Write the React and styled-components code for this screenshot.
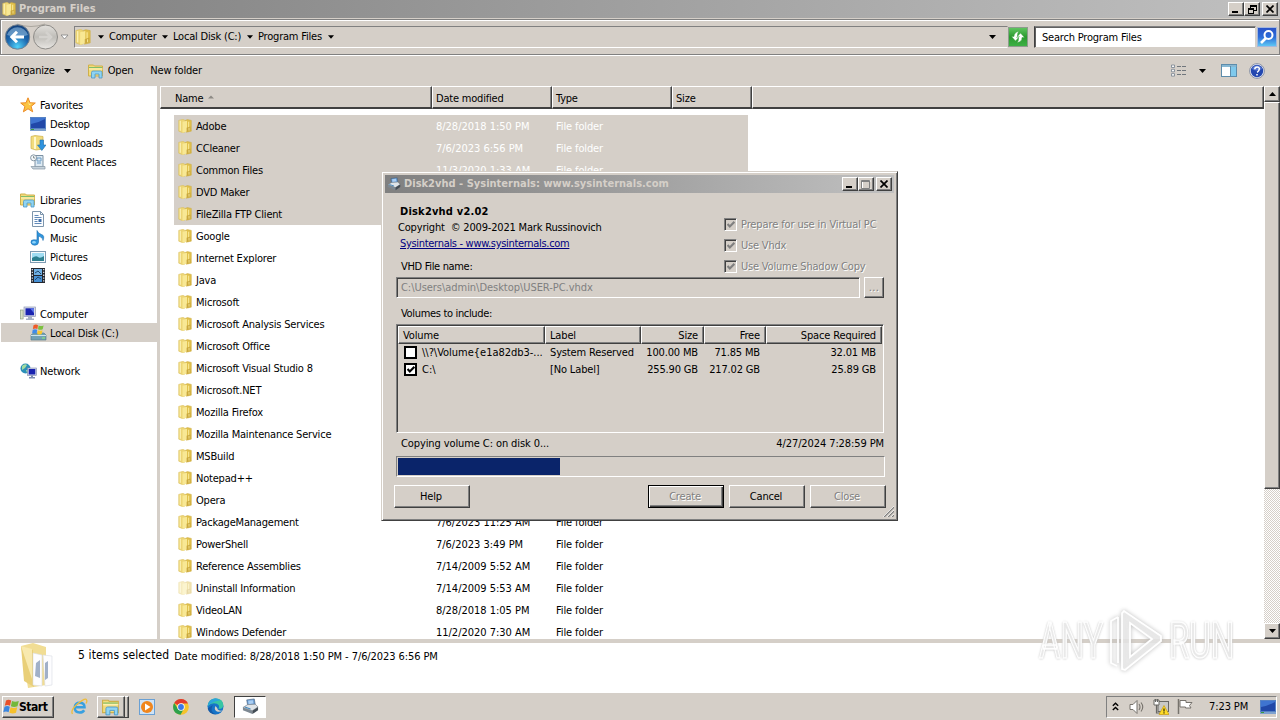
import React from "react";
import styled, { createGlobalStyle, css } from "styled-components";

const FACE = "#d5cfc8";

const Global = createGlobalStyle`
  * { box-sizing: border-box; }
  html, body { margin: 0; padding: 0; overflow: hidden; }
  body {
    font-family: "DejaVu Sans Condensed", "DejaVu Sans", Tahoma, sans-serif;
    font-stretch: condensed;
    font-size: 11px;
    line-height: 14px;
    letter-spacing: -0.2px;
    color: #000;
    white-space: pre;
  }
  svg { display: block; flex: none; }
`;

const raised = css`
  background: ${FACE};
  border: 1px solid;
  border-color: #fff #404040 #404040 #fff;
  box-shadow: inset -1px -1px 0 #808080;
`;

const Screen = styled.div`
  position: relative;
  width: 1280px;
  height: 720px;
  background: ${FACE};
  display: flex;
  flex-direction: column;
  overflow: hidden;
`;
const TitleBar = styled.div`
  height: ${(p) => p.$h}px;
  flex: none;
  display: flex;
  align-items: center;
  padding: 0 ${(p) => p.$pr ?? 2}px 0 ${(p) => p.$pad}px;
  gap: 3px;
  background: linear-gradient(90deg, #808080, #c0c0c0);
  color: ${FACE};
  font-weight: bold;
  letter-spacing: ${(p) => p.$ls}px;
`;
const Spacer = styled.div`flex: 1;`;
const CaptionButton = styled.div`
  ${raised}
  width: 16px;
  height: 14px;
  margin-left: ${(p) => (p.$gap ? -1 : -3)}px;
  display: flex;
  align-items: center;
  justify-content: center;
`;
const TitleGap = styled.div`
  height: 1px;
  flex: none;
`;
const NavBar = styled.div`
  height: 36px;
  flex: none;
  display: flex;
  align-items: center;
  padding: 0 0 0 3px;
  border: 1px solid #808080;
  box-shadow: inset 1px 1px 0 #fff, 0 1px 0 #fff;
`;
const AddressBox = styled.div`
  margin-left: 4px;
  width: 934px;
  height: 22px;
  display: flex;
  align-items: center;
  border: 1px solid;
  border-color: #808080 ${FACE} #fff #808080;
`;
const Crumb = styled.span`
  margin-left: ${(p) => p.$ml}px;
  width: ${(p) => p.$w}px;
`;
const RefreshButton = styled.div`
  width: 20px;
  height: 20px;
  border: 1px solid #8c9c8c;
  background: linear-gradient(#5fc45f, #2b9a2f 50%, #3cb043);
  display: flex;
  align-items: center;
  justify-content: center;
`;
const SearchBox = styled.div`
  margin-left: 6px;
  width: 222px;
  height: 22px;
  background: #fff;
  border: 1px solid;
  border-color: #808080 ${FACE} ${FACE} #404040;
  box-shadow: inset 1px 1px 0 #606060;
  padding: 4px 0 0 7px;
`;
const SearchButton = styled.div`
  margin-left: 1px;
  width: 20px;
  height: 20px;
  border: 1px solid #a5b8dc;
  background: linear-gradient(#2a53c8, #2c6cd8 50%, #5fc6f4);
  display: flex;
  align-items: center;
  justify-content: center;
`;
const Toolbar = styled.div`
  height: 31px;
  flex: none;
  display: flex;
  align-items: center;
  padding: 0 15px 0 12px;
`;
const ToolItem = styled.span`
  margin-right: ${(p) => p.$mr}px;
`;
const Body = styled.div`
  height: 553px;
  flex: none;
  display: flex;
`;
const Sidebar = styled.div`
  width: 157px;
  background: #fff;
  padding-top: 9px;
`;
const SideRow = styled.div`
  height: 19px;
  margin-left: 1px;
  width: ${(p) => (p.$selected ? 159 : 156)}px;
  display: flex;
  align-items: center;
  padding-left: ${(p) => (p.$child ? 29 : 19)}px;
  background: ${(p) => (p.$selected ? FACE : "transparent")};
`;
const SideIcon = styled.span`
  width: 20px;
  flex: none;
`;
const SideText = styled.span`
  padding-top: 2px;
  letter-spacing: -0.17px;
`;
const FilePane = styled.div`
  margin-left: 3px;
  flex: 1;
  background: #fff;
  overflow: hidden;
`;
const HeaderRow = styled.div`
  display: flex;
  height: 23px;
`;
const HeaderCell = styled.div`
  ${raised}
  border-bottom: 2px solid #404040;
  box-shadow: inset -1px 0 0 #808080;
  width: ${(p) => p.$w}px;
  padding: 5px 0 0 ${(p) => p.$pl ?? 3}px;
  display: flex;
  gap: 5px;
`;
const FileList = styled.div`
  padding: 6px 0 0 14px;
`;
const FileRow = styled.div`
  width: 574px;
  height: 22px;
  display: flex;
  align-items: center;
  padding-left: 4px;
  background: ${(p) => (p.$selected ? FACE : "transparent")};
`;
const FileName = styled.span`
  margin-left: 4px;
  padding-top: 2px;
  width: 240px;
`;
const FileMeta = styled.span`
  width: 120px;
  padding-top: 2px;
  letter-spacing: ${(p) => p.$ls}px;
  color: ${(p) => (p.$selected ? "#fff" : "#000")};
`;
const ScrollBar = styled.div`
  width: 16px;
  display: flex;
  flex-direction: column;
  background: repeating-conic-gradient(#fff 0 25%, ${FACE} 0 50%) 0 0 / 2px 2px;
`;
const ScrollButton = styled.div`
  ${raised}
  height: 16px;
  display: flex;
  align-items: center;
  justify-content: center;
`;
const ScrollThumb = styled.div`
  ${raised}
  height: 387px;
`;
const DetailsPane = styled.div`
  margin-top: 4px;
  height: 49px;
  flex: none;
  background: #fff;
  display: flex;
  align-items: flex-start;
  padding-left: 20px;
`;
const DetailsText = styled.span`
  font-size: ${(p) => p.$size}px;
  letter-spacing: ${(p) => p.$ls}px;
  margin: ${(p) => p.$mt}px 5px 0 0;
`;
const Taskbar = styled.div`
  flex: 1;
  border-top: 1px solid #fff;
  display: flex;
  align-items: center;
  padding: 0 3px 0 2px;
`;
const StartButton = styled.div`
  ${raised}
  width: 52px;
  height: 22px;
  display: flex;
  align-items: center;
  font-weight: bold;
  font-size: 12px;
  letter-spacing: -0.45px;
`;
const TaskSlot = styled.div`
  width: ${(p) => p.$w}px;
  height: 22px;
  margin-left: ${(p) => p.$ml}px;
  display: flex;
  align-items: center;
  justify-content: center;
  ${(p) => p.$raised && raised}
  ${(p) =>
    p.$pressed &&
    css`
      background: #fff;
      border: 1px solid;
      border-color: #404040 #fff #fff #404040;
    `}
`;
const StackEdge = styled.div`
  width: 4px;
  height: 22px;
  border-right: 1px solid #404040;
  border-top: 1px solid #fff;
  border-bottom: 1px solid #404040;
  box-shadow: inset -1px 0 0 #808080;
`;
const Tray = styled.div`
  width: 171px;
  height: 22px;
  border: 1px solid;
  border-color: #808080 #fff #fff #808080;
  display: flex;
  align-items: center;
  padding-left: 5px;
`;
const Clock = styled.span`
  margin: 0 11px 0 16px;
  width: 40px;
  letter-spacing: -0.1px;
`;

const Dialog = styled.div`
  position: absolute;
  left: 381px;
  top: 171px;
  width: 517px;
  height: 350px;
  background: ${FACE};
  border: 1px solid;
  border-color: ${FACE} #404040 #404040 ${FACE};
  box-shadow: inset 1px 1px 0 #fff, inset -1px -1px 0 #808080;
  padding: 3px;
`;
const DialogBody = styled.div`
  padding: 11px 9px 0 11px;
`;
const DialogTop = styled.div`
  display: flex;
  justify-content: space-between;
  height: 73px;
`;
const About = styled.div`
  display: flex;
  flex-direction: column;
  line-height: 16px;
`;
const AboutLine = styled.div`
  padding-left: ${(p) => p.$pl}px;
  letter-spacing: ${(p) => p.$ls}px;
  font-weight: ${(p) => (p.$bold ? "bold" : "normal")};
`;
const Link = styled(AboutLine)`
  color: #000080;
  text-decoration: underline;
`;
const Options = styled.div`
  width: 161px;
  padding-top: 10px;
`;
const Option = styled.div`
  display: flex;
  align-items: center;
  height: 21px;
  gap: 4px;
  color: #808080;
  text-shadow: 1px 1px 0 #fff;
  letter-spacing: ${(p) => p.$ls ?? -0.2}px;
`;
const OptionBox = styled.div`
  width: 13px;
  height: 13px;
  border: 1px solid;
  border-color: #808080 #fff #fff #808080;
  box-shadow: inset 1px 1px 0 #404040;
  padding: 2px 0 0 2px;
`;
const FieldRow = styled.div`
  display: flex;
  height: 21px;
  gap: 4px;
`;
const Field = styled.div`
  width: 464px;
  border: 1px solid;
  border-color: #808080 #fff #fff #808080;
  box-shadow: inset 1px 1px 0 #404040;
  color: #808080;
  padding: 3px 0 0 4px;
  letter-spacing: -0.04px;
`;
const Browse = styled.div`
  ${raised}
  width: 20px;
  text-align: center;
  color: #808080;
  text-shadow: 1px 1px 0 #fff;
  padding-top: 3px;
  letter-spacing: 0.4px;
`;
const Label = styled.div`
  padding: ${(p) => p.$pt}px 0 0 5px;
  height: ${(p) => p.$h}px;
  line-height: 14px;
  letter-spacing: -0.33px;
`;
const VolumeList = styled.div`
  width: 488px;
  height: 109px;
  border: 1px solid;
  border-color: #808080 #fff #fff #808080;
  box-shadow: inset 1px 1px 0 #404040;
  padding: 1px;
`;
const VolumeRow = styled.div`
  display: flex;
  height: 17px;
  align-items: center;
`;
const VolumeHead = styled(VolumeRow)`
  height: 18px;
  align-items: stretch;
`;
const Col = styled.div`
  width: ${(p) => p.$w}px;
  padding: 0 6px 0 ${(p) => p.$pl ?? 5}px;
  display: flex;
  align-items: center;
  gap: 4px;
  justify-content: ${(p) => (p.$right ? "flex-end" : "flex-start")};
  letter-spacing: ${(p) => p.$ls ?? -0.15}px;
`;
const HeadCol = styled(Col)`
  ${raised}
  padding: 1px 5px 0 4px;
`;
const RowBox = styled.div`
  width: 13px;
  height: 13px;
  flex: none;
  margin-right: 1px;
  border: 2px solid #000;
  background: #fff;
  padding: 1px;
`;
const StatusRow = styled.div`
  display: flex;
  justify-content: space-between;
  height: 23px;
  padding: 4px 1px 0 5px;
  letter-spacing: -0.1px;
`;
const Progress = styled.div`
  width: 489px;
  height: 21px;
  border: 1px solid;
  border-color: #808080 #fff #fff #808080;
  padding: 1px;
`;
const ProgressFill = styled.div`
  width: 162px;
  height: 17px;
  background: #0a246a;
`;
const ButtonRow = styled.div`
  display: flex;
  margin: 8px -1px 0 -2px;
  gap: 5px;
`;
const Button = styled.div`
  ${raised}
  width: 76px;
  height: 23px;
  text-align: center;
  padding: 4px 2px 0 0;
  ${(p) => p.$disabled && css`color: #808080; text-shadow: 1px 1px 0 #fff;`}
  ${(p) => p.$default && css`border-color: #000; box-shadow: inset 1px 1px 0 #fff, inset -1px -1px 0 #404040, inset -2px -2px 0 #808080;`}
`;
const Grip = styled.div`
  position: absolute;
  right: 3px;
  bottom: 3px;
`;
const Watermark = styled.div`
  position: absolute;
  left: 1039px;
  top: 608px;
  display: flex;
  align-items: center;
`;
const MarkWord = styled.span`
  width: 64px;
  font: 400 50px/66px Roboto, sans-serif;
  letter-spacing: 0;
  color: rgba(244, 244, 244, 0.8);
  -webkit-text-stroke: 1.6px rgba(255, 255, 255, 0.95);
  text-shadow: 0 0 3px #b8b8b8, 0 1px 3px #d0d0d0;
  transform: scaleX(${(p) => p.$sx});
  transform-origin: 0 50%;
`;
const MarkLogo = styled.svg`
  filter: drop-shadow(0 0 2px #b4b4b4);
`;
const Gap = styled.div`
  width: ${(p) => p.$w}px;
  flex: none;
`;
const Arrow = styled.svg`
  margin-left: ${(p) => p.$ml ?? 0}px;
  margin-right: ${(p) => p.$mr ?? 0}px;
  transform: ${(p) => (p.$up ? "rotate(180deg)" : "none")};
`;
const SortArrow = styled.svg`
  margin-top: 3px;
`;

const Down = ({ w = 7, ml, mr, up }) => (
  <Arrow width={w} height="4" viewBox="0 0 7 4" $ml={ml} $mr={mr} $up={up}><path d="M0 0h7L3.5 4z" fill="#000" /></Arrow>
);
const Check = ({ c }) => (
  <svg width="8" height="8" viewBox="0 0 8 8"><path d="M.6 3l2.2 2.4L7.4.8" fill="none" stroke={c} strokeWidth="2.1" /></svg>
);
const Folder = ({ size = 15, faded }) => (
  <svg width={size} height={size} viewBox="0 0 14 15" opacity={faded ? 0.45 : 1} preserveAspectRatio="none">
    <path d="M.7 1.500L5 .3 7 1.500V14l-2.500.6L.7 13z" fill="#edd574" stroke="#d8bd58" strokeWidth=".5" />
    <path d="M7.500 1.300l2-.7 3.800.9V13l-5 1.200z" fill="#e0c04c" stroke="#cba93a" strokeWidth=".5" />
    <path d="M4.500 3l4.500-1.200v11.500L4.500 14.700z" fill="#f8e894" />
    <path d="M2.300 2v10.500" stroke="#fbf0b4" strokeWidth="1.200" /><path d="M10.600 3v6" stroke="#f6e48e" strokeWidth="1.200" />
    <path d="M8.500 9.500l4-1.500v4.500l-4 1.300z" fill="#bf9a34" opacity=".65" />
    <path d="M11 9.500v3" stroke="#f6e48e" />
  </svg>
);
const Library = ({ size = 16 }) => (
  <svg width={size} height={size} viewBox="0 0 16 16">
    <path d="M.5 3V2h5l1 1h8v10h-14z" fill="#f2db7b" stroke="#cfb04b" />
    <path d="M1 4.5h13" stroke="#7fbf6d" /><path d="M1 6h13.5" stroke="#fff5bc" />
    <path d="M3.5 15V9.500Q3.500 8 5 8h7.500Q14 8 14 9.500V15h-3v-4H7v4z" fill="#8fd4f2" stroke="#4c97c8" strokeWidth=".8" />
  </svg>
);
const Screen16 = () => (
  <svg width="16" height="14" viewBox="0 0 16 14">
    <rect x=".5" y=".5" width="15" height="11" fill="#2148a8" stroke="#5682c4" />
    <path d="M1 7q7-1 14-5V1H1z" fill="#3f74d0" /><path d="M0 12h16v2H0z" fill="#7fa2cf" /><path d="M1 12h3v1H1z" fill="#3b9c3f" />
  </svg>
);
const Monitor = () => (
  <svg width="16" height="16" viewBox="0 0 16 16">
    <rect x="4" y="1" width="11.5" height="9.5" fill="#d6dae8" stroke="#8f98b4" strokeWidth=".7" />
    <rect x="5.5" y="2.3" width="8.5" height="7" fill="#1923b0" /><path d="M10 2.3h4v5z" fill="#5a74e8" />
    <path d="M8 10.5h4v2h2v1.5H6v-1.5h2z" fill="#a4afc5" /><rect x=".5" y="4" width="2.6" height="9" fill="#d8dfc6" stroke="#7c9176" strokeWidth=".6" />
  </svg>
);
const Drive = () => (
  <svg width="17" height="17" viewBox="0 0 17 17">
    <path d="M1 11l3-2h10l2 2v5H1z" fill="#72a1b4" stroke="#4f7788" strokeWidth=".6" /><path d="M1 11.5h15" stroke="#cde3ea" />
    <path d="M3.500 1.200q2.500-1.500 4.500 0L7.400 5q-2-1-4.500 0z" fill="#ee5b2a" /><path d="M8.600 1.500q2.400 1.200 5 0L12.700 5.200q-2.500 1-4.700 0z" fill="#7cc13f" />
    <path d="M2.700 5.800q2.300-1 4.500 0L6.600 9.500q-2-1-4.500 0z" fill="#3f8ce8" /><path d="M7.800 6.200q2 1.200 4.700 0l-.8 3.800q-2.500 1-4.500 0z" fill="#f8c72c" />
    <path d="M12 14h3" stroke="#8ff070" />
  </svg>
);
const sideIcons = {
  star: <svg width="16" height="16" viewBox="0 0 16 16"><path d="M8 .8l2 5 5.300.2-4.200 3.400 1.600 5.400L8 11.800l-4.600 3 1.500-5.400L.7 6 6 5.800z" fill="#fbc443" stroke="#ec8b25" /><path d="M8 3.500l1.200 3.200h3L9 8z" fill="#fff1a8" /></svg>,
  desktop: <Screen16 />,
  downloads: <svg width="16" height="16" viewBox="0 0 16 16"><path d="M1 1.5l4-1 8 1V14l-7 1-5-1.5z" fill="#f2dc7d" stroke="#cfb04b" strokeWidth=".7" /><path d="M5 2v12" stroke="#fff8cc" strokeWidth="2" /><path d="M10 5h3.500v5H16l-4.200 5.500L7.500 10H10z" fill="#2e93df" stroke="#1f6fae" strokeWidth=".6" /></svg>,
  recent: <svg width="16" height="16" viewBox="0 0 16 16"><path d="M5 1.500h8V13H5z" fill="#dce9f2" stroke="#7c91a3" /><path d="M7 4h4v3H7zM7 9h4" fill="none" stroke="#6c9cc5" /><path d="M1 12.500h14v2.500H3z" fill="#c6d2db" stroke="#8596a3" strokeWidth=".7" /><circle cx="3.600" cy="3.800" r="3" fill="#f6f9fb" stroke="#8596a3" /><path d="M3.600 2v2h1.600" stroke="#566" fill="none" strokeWidth=".7" /></svg>,
  library: <Library />,
  documents: <svg width="16" height="16" viewBox="0 0 16 16"><path d="M2.500.5h8l3 3v12h-11z" fill="#fbfdff" stroke="#7d95ac" /><path d="M10.500.5v3h3" fill="none" stroke="#7d95ac" /><path d="M4.500 4.500h4M4.500 6.500h7M4.500 8.500h3M4.500 10.500h3M4.500 12.500h7" stroke="#6189b8" /><path d="M8.500 8h3v3h-3z" fill="#3f6da8" /></svg>,
  music: <svg width="16" height="16" viewBox="0 0 16 16"><path d="M7 .5q1 3 4.500 4t1.500 6q.3-3-4.500-4.500V12q0 3-3.500 3.200T1 12.500t3-2.700l3 .2z" fill="#2f96dd" stroke="#1a6cb0" strokeWidth=".6" /><ellipse cx="4" cy="12.200" rx="1.800" ry="1.200" fill="#8fd4fa" /></svg>,
  pictures: <svg width="16" height="12" viewBox="0 0 16 12"><rect x=".5" y=".5" width="15" height="11" fill="#f7fafc" stroke="#7e9bb2" /><path d="M2 2h12v8H2z" fill="#9fdcf2" /><path d="M2 7q4-3 6-1t6-1v5H2z" fill="#2c8090" /></svg>,
  videos: <svg width="16" height="15" viewBox="-1 0 16 15"><path d="M0 0h14v15H0z" fill="#23272f" /><path d="M3 1h8v6H3z" fill="#6fb0e4" /><path d="M3 8h8v6H3z" fill="#4690d4" /><path d="M4 5l3-2 3 3M4 12l3-3 3 2" stroke="#23486c" fill="none" /><path d="M1.300 1v14M12.700 1v14" stroke="#e8ecf2" strokeWidth="1.200" strokeDasharray="1.300 1.500" /></svg>,
  computer: <Monitor />,
  drive: <Drive />,
  network: <svg width="17" height="16" viewBox="0 0 17 16"><circle cx="5.500" cy="5.500" r="5" fill="#2b8fb8" /><path d="M2 3q3-3 5-1L5 5 2 7zM6 7l3 0-2 3z" fill="#a2dba0" /><rect x="7.500" y="5" width="9" height="7.500" fill="#d3d8ea" stroke="#7b86a8" strokeWidth=".6" /><rect x="8.700" y="6" width="6.600" height="5.500" fill="#1923b0" /><path d="M11 12.500h2V14h2v1.500H9V14h2z" fill="#7c8cb0" /></svg>,
};
const DiskTool = ({ size = 15 }) => (
  <svg width={size} height={size} viewBox="0 0 18 16">
    <path d="M5 1l8-1 1 6-8 1z" fill="#6c9fd6" stroke="#38526c" strokeWidth=".6" /><path d="M6.500 2l5-.7.6 3.500-5 .7z" fill="#a9cef4" />
    <path d="M1 9l5-3 8-.5 3 3-6 4z" fill="#dfe4e8" stroke="#67727c" strokeWidth=".6" /><path d="M1 9l10 3.500V16L1 12z" fill="#7d8892" /><path d="M11 12.500l6-4V12l-6 4z" fill="#434c55" />
    <path d="M3 8.600l6 2" stroke="#4487ba" strokeWidth="1.200" />
  </svg>
);

const sidebar = [
  ["star", "Favorites"], ["desktop", "Desktop", 1], ["downloads", "Downloads", 1], ["recent", "Recent Places", 1], null,
  ["library", "Libraries"], ["documents", "Documents", 1], ["music", "Music", 1], ["pictures", "Pictures", 1], ["videos", "Videos", 1], null,
  ["computer", "Computer"], ["drive", "Local Disk (C:)", 1], null, ["network", "Network"],
];
const files = [
  ["Adobe", "8/28/2018 1:50 PM"], ["CCleaner", "7/6/2023 6:56 PM"], ["Common Files", "11/3/2020 1:33 AM"],
  ["DVD Maker"], ["FileZilla FTP Client"], ["Google"], ["Internet Explorer"], ["Java"], ["Microsoft"],
  ["Microsoft Analysis Services"], ["Microsoft Office"], ["Microsoft Visual Studio 8"], ["Microsoft.NET"],
  ["Mozilla Firefox"], ["Mozilla Maintenance Service"], ["MSBuild"], ["Notepad++"], ["Opera"],
  ["PackageManagement", "7/6/2023 11:25 AM"], ["PowerShell", "7/6/2023 3:49 PM"],
  ["Reference Assemblies", "7/14/2009 5:52 AM"], ["Uninstall Information", "7/14/2009 5:53 AM"],
  ["VideoLAN", "8/28/2018 1:05 PM"], ["Windows Defender", "11/2/2020 7:30 AM"],
];
const volumes = [
  [false, "\\\\?\\Volume{e1a82db3-...", "System Reserved", "100.00 MB", "71.85 MB", "32.01 MB"],
  [true, "C:\\", "[No Label]", "255.90 GB", "217.02 GB", "25.89 GB"],
];

const MinGlyph = () => <svg width="8" height="8"><path d="M0 6h6v2H0z" /></svg>;
const MaxGlyph = () => <svg width="10" height="9"><path d="M1.500 1v8h9V1z" fill="none" stroke="#fff" /><path d="M.5.5h8v8h-8zM.5 1.500h8" fill="none" stroke="#808080" /></svg>;
const RestoreGlyph = () => <svg width="9" height="9" shapeRendering="crispEdges"><path d="M2.500 3V.5h6v5H6M2 1.500h7M.5 3.500h5v5h-5zM0 4.500h6" fill="none" stroke="#000" /></svg>;
const CloseGlyph = () => <svg width="8" height="8"><path d="M.5.5l7 7M7.500.5l-7 7" stroke="#000" strokeWidth="1.700" /></svg>;

export default function App() {
  return (
    <Screen>
      <Global />
      <TitleBar $h={18} $pad={2} $pr={2} $ls={-0.08}>
        <Folder size={14} />
        Program Files
        <Spacer />
        <CaptionButton><MinGlyph /></CaptionButton>
        <CaptionButton><RestoreGlyph /></CaptionButton>
        <CaptionButton $gap><CloseGlyph /></CaptionButton>
      </TitleBar>
      <TitleGap />
      <NavBar>
        <svg width="66" height="28" viewBox="0 0 66 28">
          <defs>
            <radialGradient id="bk" cx=".5" cy=".9" r=".9"><stop offset="0" stopColor="#4fd2fa" /><stop offset=".5" stopColor="#1d67ae" /><stop offset="1" stopColor="#123e78" /></radialGradient>
            <linearGradient id="fw" x2="0" y2="1"><stop offset="0" stopColor="#e2e0dc" /><stop offset=".5" stopColor="#bfbdb8" /><stop offset="1" stopColor="#e9e7e4" /></linearGradient>
          </defs>
          <path d="M13 1q14 5 28 0" stroke="#aaa69e" fill="none" />
          <circle cx="13.500" cy="14" r="12.200" fill="url(#bk)" stroke="#75828f" /><path d="M3 12a11 11 0 0 1 21 0q-10 4-21 0" fill="#9cc4e6" opacity=".55" />
          <path d="M20 14H8.500M13 8.800L7.800 14l5.200 5.200" stroke="#fff" strokeWidth="3" fill="none" />
          <circle cx="41.500" cy="14" r="12" fill="url(#fw)" stroke="#8e8c88" /><path d="M35 14h11.500M42 9l5 5-5 5" stroke="#d4d2ce" strokeWidth="2.600" fill="none" />
          <path d="M57 12h7l-3.500 4z" fill="#fff" stroke="#808080" strokeWidth=".8" />
        </svg>
        <AddressBox>
          <Folder size={16} />
          <Down w={6} ml={7} />
          <Crumb $ml={5} $w={53}>Computer</Crumb>
          <Down w={6} />
          <Crumb $ml={5} $w={74}>Local Disk (C:)</Crumb>
          <Down w={6} />
          <Crumb $ml={5} $w={70}>Program Files</Crumb>
          <Down w={6} />
          <Spacer />
          <Down mr={11} />
        </AddressBox>
        <RefreshButton>
          <svg width="16" height="14" viewBox="0 0 16 14"><path d="M1.500 6.500H4Q4 2 9 1.500 7 3 7.500 6.500h2L5.500 11zM14.500 7.500H12q0 4.500-5 5 2-1.500 1.500-5h-2L10.500 3z" fill="#fff" stroke="#2b9a2f" strokeWidth=".4" /></svg>
        </RefreshButton>
        <SearchBox>Search Program Files</SearchBox>
        <SearchButton>
          <svg width="16" height="16" viewBox="0 0 16 16"><circle cx="9.500" cy="6" r="4" fill="none" stroke="#fff" strokeWidth="2" /><path d="M7 9l-5 5" stroke="#fff" strokeWidth="2.600" /></svg>
        </SearchButton>
      </NavBar>
      <Toolbar>
        <ToolItem $mr={9}>Organize</ToolItem>
        <Down />
        <Gap $w={17} />
        <Library />
        <Gap $w={4} />
        <ToolItem $mr={17}>Open</ToolItem>
        <ToolItem $mr={0}>New folder</ToolItem>
        <Spacer />
        <svg width="16" height="13" viewBox="0 0 16 13"><path d="M.5 1h3v2.500h-3zM.5 5.300h3v2.500h-3zM.5 9.600h3v2.500h-3z" fill="#f7f7f7" stroke="#76828e" strokeWidth=".8" /><path d="M6 2.500h4m1 0h4M6 6.500h4m1 0h4M6 10.500h4m1 0h4" stroke="#70767c" /></svg>
        <Gap $w={12} />
        <Down />
        <Gap $w={15} />
        <svg width="17" height="15" viewBox="0 0 17 15"><rect x=".5" y="1.500" width="15" height="12" fill="#fff" stroke="#5d8cab" /><path d="M1 3h15" stroke="#5fa0c4" strokeWidth="1.500" /><rect x="10" y="4" width="5" height="9" fill="#7fc9ec" /><path d="M9.500 3v10" stroke="#5d8cab" /></svg>
        <Gap $w={11} />
        <svg width="16" height="16" viewBox="0 0 16 16"><circle cx="8" cy="8" r="7.400" fill="#e8ebf4" stroke="#8992a6" /><circle cx="8" cy="8" r="6.200" fill="#2347b0" /><path d="M3 6a5.300 5.300 0 0 1 10 0q-5 3-10 0" fill="#7d9be8" opacity=".6" /><path d="M5.800 6.300q0-2.300 2.300-2.300t2.200 2-2.200 3.300M8 11v1.500" stroke="#fff" strokeWidth="1.500" fill="none" /></svg>
      </Toolbar>
      <Body>
        <Sidebar>
          {sidebar.map((r, i) =>
            r ? (
              <SideRow key={i} $child={r[2]} $selected={r[0] === "drive"}>
                <SideIcon>{sideIcons[r[0]]}</SideIcon>
                <SideText>{r[1]}</SideText>
              </SideRow>
            ) : <SideRow key={i} />
          )}
        </Sidebar>
        <FilePane>
          <HeaderRow>
            <HeaderCell $w={272} $pl={14}>Name<SortArrow width="6" height="4" viewBox="0 0 6 4"><path d="M0 3.500h6L3 .5z" fill="#8d8a84" /></SortArrow></HeaderCell>
            <HeaderCell $w={120}>Date modified</HeaderCell>
            <HeaderCell $w={120}>Type</HeaderCell>
            <HeaderCell $w={80}>Size</HeaderCell>
            <HeaderCell $w={512} />
          </HeaderRow>
          <FileList>
            {files.map(([name, date], i) => (
              <FileRow key={name} $selected={i < 5}>
                <Folder size={14} faded={name === "Uninstall Information"} />
                <FileName>{name}</FileName>
                <FileMeta $selected={i < 5} $ls={-0.02}>{date}</FileMeta>
                {date && <FileMeta $selected={i < 5} $ls={-0.12}>File folder</FileMeta>}
              </FileRow>
            ))}
          </FileList>
        </FilePane>
        <ScrollBar>
          <ScrollButton><Down up /></ScrollButton>
          <ScrollThumb />
          <Spacer />
          <ScrollButton><Down /></ScrollButton>
        </ScrollBar>
      </Body>
      <DetailsPane>
        <svg width="36" height="46" viewBox="0 0 36 46">
          <path d="M1 3L13 0l13 4v38L8 45z" fill="#f1dd94" /><path d="M1 3l12 4 1 37-10-6z" fill="#e9cf78" /><path d="M1 3l11 3v30z" fill="#f8e9ae" />
          <path d="M13 10l9 2v31l-9-1zM23 12l9 1v29l-7 1z" fill="#fdfdff" stroke="#d8dbe2" strokeWidth=".6" /><path d="M16 20l4-3v18l-5-2zM25 20l3-2v17l-3 2z" fill="#8a9cba" opacity=".8" />
        </svg>
        <Gap $w={22} />
        <DetailsText $size={12} $ls={0.12} $mt={5}>5 items selected</DetailsText>
        <DetailsText $size={11} $ls={-0.08} $mt={7}>Date modified: 8/28/2018 1:50 PM - 7/6/2023 6:56 PM</DetailsText>
      </DetailsPane>
      <Taskbar>
        <StartButton>
          <svg width="16" height="16" viewBox="0 0 16 16"><path d="M3 1.500q2.500-1.500 5.200 0L7 6.700Q4.500 5.200 1.800 6.700z" fill="#e8502a" /><path d="M9 2q3 1.500 6.800 0l-1.300 5.200Q11 8.700 7.900 7.200z" fill="#74b83a" /><path d="M1.500 7.800q2.700-1.500 5.300 0l-1.200 5.400Q3 11.700.3 13.200z" fill="#3a86e0" /><path d="M7.600 8.300q3 1.500 6.600 0L13 13.700q-3.300 1.500-6.600 0z" fill="#f6c02b" /></svg>
          Start
        </StartButton>
        <TaskSlot $w={18} $ml={16}>
          <svg width="18" height="18" viewBox="0 0 18 18"><path d="M4.500 9.300h10Q14.500 4.800 9.800 4.800T4.700 9.500q0 5 5 5 3 0 4.500-2.300" fill="none" stroke="#38a0e0" strokeWidth="2.500" /><path d="M2.500 16q-2.500-4 5.500-10.500T16.500 2q1 1-.5 3.500" fill="none" stroke="#eebd3c" strokeWidth="1.300" /></svg>
        </TaskSlot>
        <TaskSlot $w={28} $ml={9} $raised><Library size={18} /></TaskSlot>
        <StackEdge />
        <TaskSlot $w={18} $ml={9}>
          <svg width="16" height="16" viewBox="0 0 16 16"><rect x=".5" y=".5" width="15" height="15" fill="#cfe3f6" stroke="#6aa0d4" /><circle cx="8" cy="8" r="6" fill="#f0861d" /><path d="M6 4.500L11.500 8 6 11.500z" fill="#fff" /></svg>
        </TaskSlot>
        <TaskSlot $w={18} $ml={16}>
          <svg width="16" height="16" viewBox="0 0 16 16"><circle cx="8" cy="8" r="7.800" fill="#f5c32c" /><path d="M8 8L1.200 4A7.800 7.800 0 0 1 15 4.400H8z" fill="#e23b2e" /><path d="M1.200 4A7.800 7.800 0 0 0 7.500 15.800L11 9.500 5 10z" fill="#2da14c" /><circle cx="8" cy="8" r="3.700" fill="#fff" /><circle cx="8" cy="8" r="2.900" fill="#3b78e7" /></svg>
        </TaskSlot>
        <TaskSlot $w={18} $ml={16}>
          <svg width="17" height="17" viewBox="0 0 17 17"><circle cx="8.500" cy="8.500" r="8" fill="#1674c8" /><path d="M.7 8Q2 .6 8.800.6q7.300.4 7.600 6.600-.4 4-5 3.600 2-3.500-1.600-5Q5 4 .7 8" fill="#37c6a4" /><path d="M.7 8Q2 1.500 8 .6q4 .2 5 1.800Q6 2.500.7 8" fill="#2ba6dc" /><path d="M8.500 8q-2 3.500 1.500 5.500 3 1 5.800-1-5 .8-5.600-2.500z" fill="#d5cfc8" /><path d="M5.800 7Q2 14 9 16.500q-7-.6-8.400-6z" fill="#123f88" opacity=".5" /></svg>
        </TaskSlot>
        <TaskSlot $w={32} $ml={10} $pressed><DiskTool size={17} /></TaskSlot>
        <Spacer />
        <Tray>
          <svg width="7" height="9" viewBox="0 0 7 9"><path d="M.8 3.800L3.500 1.200l2.700 2.600M.8 8l2.700-2.600L6.200 8" fill="none" stroke="#000" strokeWidth="1.400" /></svg>
          <Gap $w={10} />
          <svg width="16" height="16" viewBox="0 0 16 16"><path d="M1 5.500h3l4-4v13l-4-4H1z" fill="#fff" stroke="#77736d" /><path d="M10 5q2 3 0 6M12 3.500q3.500 4.500 0 9" fill="none" stroke="#77736d" strokeWidth="1.100" /></svg>
          <Gap $w={8} />
          <svg width="16" height="16" viewBox="0 0 16 16"><rect x="5" y="2.500" width="10.500" height="10" fill="#c9c9c7" stroke="#686865" /><path d="M1 1h5v5H1z" fill="#fff" stroke="#686865" /><path d="M2.500 0v3M4.500 0v3M3.500 6v8H7" fill="none" stroke="#686865" strokeWidth="1.200" /><path d="M11 6.500l5 9H6z" fill="#ffdc28" stroke="#c79b0e" strokeWidth=".7" /><path d="M11 9.500v3m0 .8v1.200" stroke="#000" /></svg>
          <Gap $w={8} />
          <svg width="16" height="15" viewBox="0 0 16 15"><path d="M1.500 0v15" stroke="#77736d" strokeWidth="1.500" /><path d="M3 1.500h6v2h6l-2.500 3L14 9H8.500V8H3z" fill="#fff" stroke="#77736d" /></svg>
          <Clock>7:23 PM</Clock>
          <Screen16 />
        </Tray>
      </Taskbar>

      <Dialog>
        <TitleBar $h={18} $pad={2} $ls={0.01}>
          <DiskTool size={14} />
          Disk2vhd - Sysinternals: www.sysinternals.com
          <Spacer />
          <CaptionButton><MinGlyph /></CaptionButton>
          <CaptionButton><MaxGlyph /></CaptionButton>
          <CaptionButton $gap><CloseGlyph /></CaptionButton>
        </TitleBar>
        <DialogBody>
          <DialogTop>
            <About>
              <AboutLine $bold $pl={4} $ls={0.2}>Disk2vhd v2.02</AboutLine>
              <AboutLine $pl={2} $ls={-0.18}>Copyright  © 2009-2021 Mark Russinovich</AboutLine>
              <Link $pl={4} $ls={-0.31}>Sysinternals - www.sysinternals.com</Link>
              <Label $pt={8} $h={22}>VHD File name:</Label>
            </About>
            <Options>
              <Option $ls={-0.12}><OptionBox><Check c="#808080" /></OptionBox>Prepare for use in Virtual PC</Option>
              <Option><OptionBox><Check c="#808080" /></OptionBox>Use Vhdx</Option>
              <Option><OptionBox><Check c="#808080" /></OptionBox>Use Volume Shadow Copy</Option>
            </Options>
          </DialogTop>
          <FieldRow>
            <Field>C:\Users\admin\Desktop\USER-PC.vhdx</Field>
            <Browse>...</Browse>
          </FieldRow>
          <Label $pt={9} $h={26}>Volumes to include:</Label>
          <VolumeList>
            <VolumeHead>
              <HeadCol $w={147}>Volume</HeadCol>
              <HeadCol $w={96}>Label</HeadCol>
              <HeadCol $w={63} $right>Size</HeadCol>
              <HeadCol $w={62} $right>Free</HeadCol>
              <HeadCol $w={116} $right>Space Required</HeadCol>
            </VolumeHead>
            {volumes.map(([on, name, label, size, free, need]) => (
              <VolumeRow key={name}>
                <Col $w={147} $pl={6} $ls={-0.02}><RowBox>{on && <Check c="#000" />}</RowBox>{name}</Col>
                <Col $w={96}>{label}</Col>
                <Col $w={63} $right>{size}</Col>
                <Col $w={62} $right>{free}</Col>
                <Col $w={116} $right>{need}</Col>
              </VolumeRow>
            ))}
          </VolumeList>
          <StatusRow><span>Copying volume C: on disk 0...</span><span>4/27/2024 7:28:59 PM</span></StatusRow>
          <Progress><ProgressFill /></Progress>
          <ButtonRow>
            <Button>Help</Button>
            <Spacer />
            <Button $disabled $default>Create</Button>
            <Button>Cancel</Button>
            <Button $disabled>Close</Button>
          </ButtonRow>
        </DialogBody>
        <Grip>
          <svg width="11" height="11"><path d="M1 11L11 1M5 11l6-6M9 11l2-2" stroke="#808080" strokeWidth="1.400" /><path d="M0 11L11 0M4 11l7-7M8 11l3-3" stroke="#fff" strokeWidth=".7" /></svg>
        </Grip>
      </Dialog>

      <Watermark>
        <MarkWord $sx={0.66}>ANY</MarkWord>
        <MarkLogo width="66" height="66" viewBox="0 0 66 66">
          <path d="M21 3L58 28v5L22 62l-3-1V5zM27 15v34l22-18z" fill="rgba(248,248,248,.6)" stroke="#fff" strokeWidth="1.800" fillRule="evenodd" />
          <path d="M15 9L8 13v42l6 3M15 9v46" fill="none" stroke="#fff" strokeWidth="1.800" />
        </MarkLogo>
        <MarkWord $sx={0.66}>RUN</MarkWord>
      </Watermark>
    </Screen>
  );
}
